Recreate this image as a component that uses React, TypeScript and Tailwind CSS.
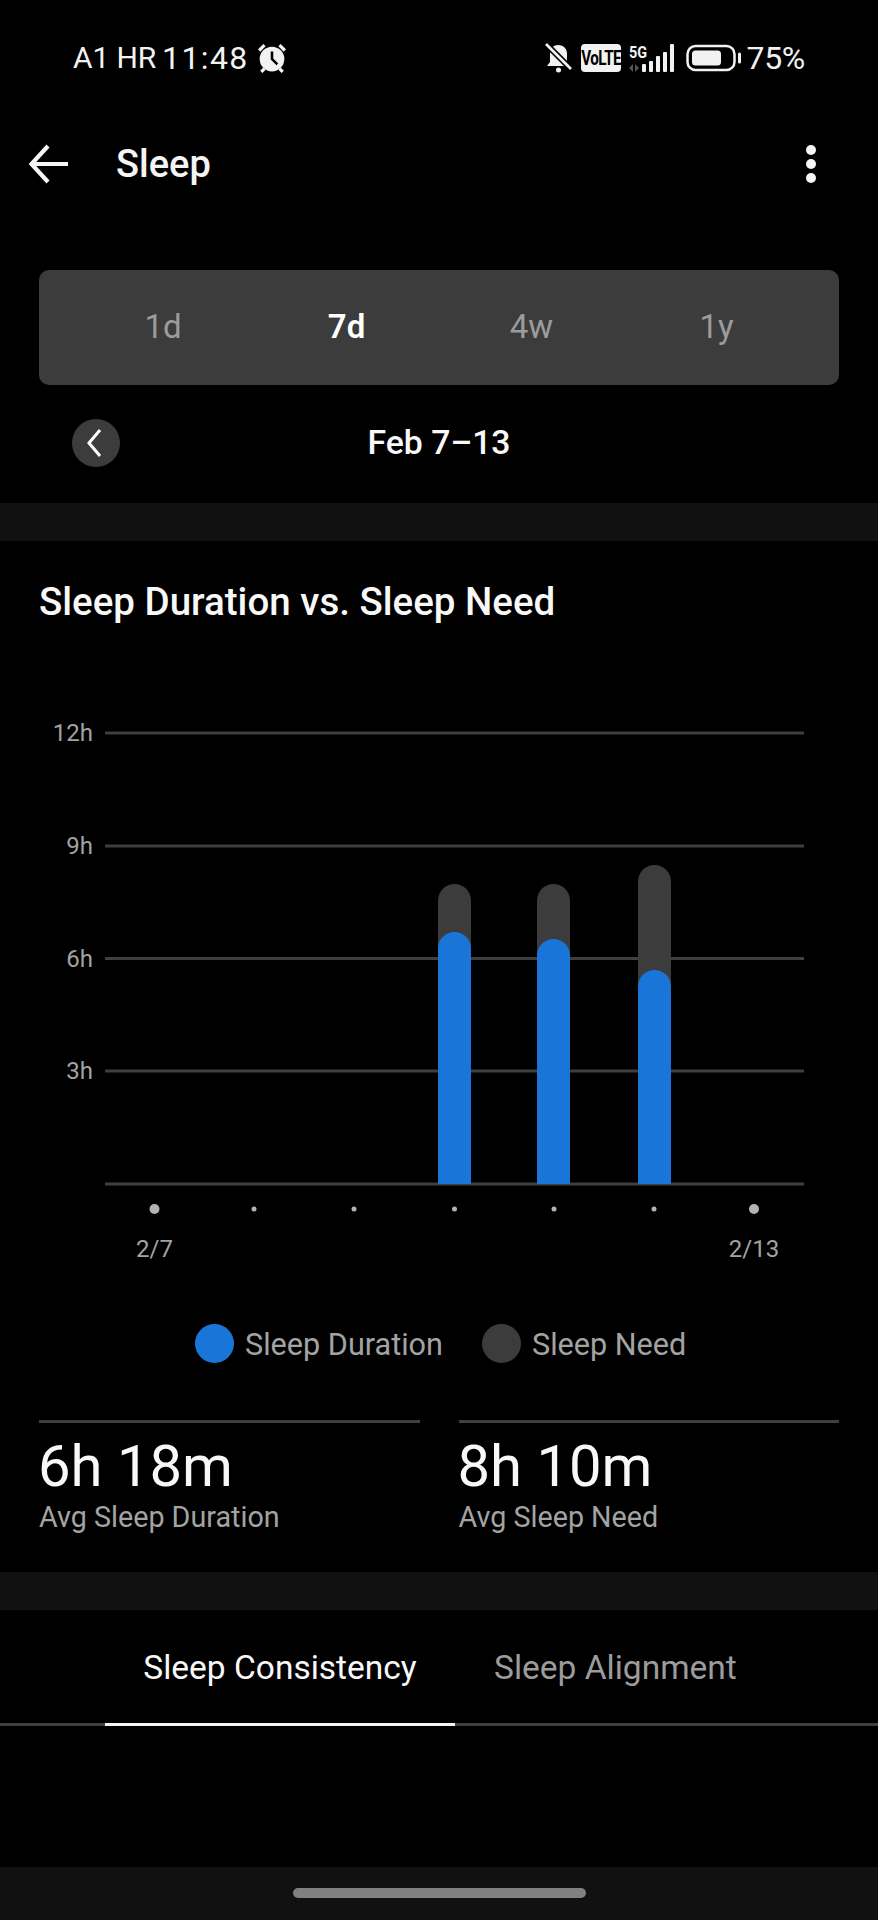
import React from "react";

const ranges = [
  { label: "1d", active: false },
  { label: "7d", active: true },
  { label: "4w", active: false },
  { label: "1y", active: false },
];

const gridLines = [
  { y: 733, label: "12h" },
  { y: 846, label: "9h" },
  { y: 958.5, label: "6h" },
  { y: 1071, label: "3h" },
];

const bars = [
  { x: 438, need: 884, duration: 932 },
  { x: 537, need: 884, duration: 939 },
  { x: 638, need: 865, duration: 970 },
];

const dots = [
  { x: 154.5, r: 5 },
  { x: 254, r: 2.5 },
  { x: 354, r: 2.5 },
  { x: 454.5, r: 2.5 },
  { x: 554, r: 2.5 },
  { x: 654, r: 2.5 },
  { x: 754, r: 5 },
];

const barPath = (x: number, top: number) => {
  const w = 33;
  const r = 16.5;
  return `M${x} 1184V${top + r}a${r} ${r} 0 0 1 ${w} 0V1184Z`;
};

const StatusBar = () => (
  <div className="h-[116px] flex items-center pl-[73px] pr-[73px] text-[#f2f2f2] relative">
    <span className="text-[30px] leading-none w-[85px] whitespace-nowrap tracking-[-0.1px]">A1 HR</span>
    <span className="text-[32px] leading-none ml-[4px] whitespace-nowrap tracking-[1.4px]">11:48</span>
    <svg className="ml-[8px]" width="30" height="30" viewBox="0 0 28 28">
      <circle cx="14" cy="15" r="11.5" fill="#f2f2f2" />
      <path d="M14 8v7l5 5" stroke="#000" strokeWidth="2.4" fill="none" />
      <path d="M2 7l5-5M26 7l-5-5M4 27l3-3M24 27l-3-3" stroke="#f2f2f2" strokeWidth="3" fill="none" />
    </svg>
    <div className="ml-auto flex items-center">
      <svg width="27" height="30" viewBox="0 0 27 30">
        <path d="M13 2c-5 0-8 4-8 9v8l-3 4h23l-3-4v-8c0-5-3-9-9-9z" fill="#f2f2f2" />
        <path d="M1 1l25 25" stroke="#000" strokeWidth="6" />
        <path d="M1 1l25 25" stroke="#f2f2f2" strokeWidth="2.6" />
        <circle cx="13.5" cy="27" r="2.5" fill="#f2f2f2" />
      </svg>
      <div className="ml-[9px] w-[40px] h-[28px] rounded-[4px] bg-[#f2f2f2] text-black text-[20px] font-bold leading-none flex items-center justify-center tracking-[-0.8px]">
        <span className="inline-block scale-x-[0.76] whitespace-nowrap">VoLTE</span>
      </div>
      <div className="ml-[8px] relative w-[45px] h-[28px]">
        <span className="absolute left-0 top-[0px] text-[17px] font-bold leading-none inline-block origin-left scale-x-[0.85]">5G</span>
        <svg className="absolute left-0 top-0" width="45" height="28" viewBox="0 0 45 28">
          <path d="M4 20v8L0 24zM6 20l4 4-4 4z" fill="#555" />
          <rect x="13" y="20" width="4" height="8" rx="1" fill="#f2f2f2" />
          <rect x="20" y="17" width="4" height="11" rx="1" fill="#f2f2f2" />
          <rect x="27" y="12" width="4" height="16" rx="1" fill="#f2f2f2" />
          <rect x="34" y="8" width="4" height="20" rx="1" fill="#f2f2f2" />
          <rect x="41" y="0" width="4" height="28" rx="1" fill="#f2f2f2" />
        </svg>
      </div>
      <svg className="ml-[12px]" width="55" height="28" viewBox="0 0 55 28">
        <rect x="1.5" y="2" width="47" height="24" rx="8" fill="none" stroke="#f2f2f2" strokeWidth="2.5" />
        <rect x="6" y="6.5" width="29" height="15" rx="3.5" fill="#f2f2f2" />
        <rect x="52" y="8.5" width="3" height="11" rx="1.5" fill="#f2f2f2" />
      </svg>
      <span className="ml-[5px] text-[32px] leading-none whitespace-nowrap tracking-[-0.3px]">75%</span>
    </div>
  </div>
);

const Header = () => (
  <div className="h-[96px] flex items-center relative">
    <svg className="ml-[28px]" width="41" height="42" viewBox="0 0 41 42" fill="none" stroke="#f5f5f5" strokeWidth="4.2">
      <path d="M40 21H5" />
      <path d="M20 3L3.5 21 20 39" />
    </svg>
    <h1 className="ml-[47px] text-[38px] font-medium leading-none text-[#f5f5f5]">Sleep</h1>
    <div className="ml-auto mr-[62px] flex flex-col gap-[4px]">
      <span className="w-[10px] h-[10px] rounded-full bg-[#f5f5f5]" />
      <span className="w-[10px] h-[10px] rounded-full bg-[#f5f5f5]" />
      <span className="w-[10px] h-[10px] rounded-full bg-[#f5f5f5]" />
    </div>
  </div>
);

const Chart = () => (
  <svg className="block" width="878" height="580" viewBox="0 700 878 580">
    {gridLines.map((line) => (
      <g key={line.label}>
        <line x1="105" x2="804" y1={line.y} y2={line.y} stroke="#3f3f3f" strokeWidth="3" />
        <text x="93" y={line.y + 8} textAnchor="end" fill="#a3a3a3" fontSize="24">
          {line.label}
        </text>
      </g>
    ))}
    <line x1="105" x2="804" y1="1184" y2="1184" stroke="#3f3f3f" strokeWidth="3" />
    {bars.map((bar) => (
      <g key={bar.x}>
        <path d={barPath(bar.x, bar.need)} fill="#3c3c3c" />
        <path d={barPath(bar.x, bar.duration)} fill="#1976d8" />
      </g>
    ))}
    {dots.map((dot) => (
      <circle key={dot.x} cx={dot.x} cy="1209" r={dot.r} fill="#b3b3b3" />
    ))}
    <text x="154.5" y="1257" textAnchor="middle" fill="#a3a3a3" fontSize="24">2/7</text>
    <text x="754" y="1257" textAnchor="middle" fill="#a3a3a3" fontSize="24">2/13</text>
  </svg>
);

const Stat = ({ value, label }: { value: string; label: string }) => (
  <div className="flex-1 border-t-[3px] border-[#3f3f3f]">
    <div className="mt-[17px] -ml-[1px] text-[58px] leading-[52px] text-[#f8f8f8]">{value}</div>
    <div className="mt-[7px] text-[28.7px] leading-[36px] text-[#a3a3a3]">{label}</div>
  </div>
);

export default function App() {
  return (
    <div className="w-[878px] h-[1920px] bg-black overflow-hidden flex flex-col font-['Roboto','Liberation_Sans',sans-serif]">
      <StatusBar />
      <Header />

      <div className="mt-[58px] mx-[39px] h-[115px] rounded-[10px] bg-[#3c3c3c] flex items-center justify-center pb-[2px]">
        {ranges.map((range) => (
          <span
            key={range.label}
            className={`w-[185px] text-center text-[33px] leading-none ${range.active ? "font-semibold text-white" : "text-[#9c9c9c]"} ${range.label === "1d" ? "pl-[3px]" : ""}`}
          >
            {range.label}
          </span>
        ))}
      </div>

      <div className="mt-[34px] h-[48px] relative flex items-center justify-center">
        <div className="absolute left-[72px] top-0 w-[48px] h-[48px] rounded-full bg-[#3c3c3c] flex items-center justify-center">
          <svg width="20" height="28" viewBox="0 0 20 28" fill="none" stroke="#fff" strokeWidth="3">
            <path d="M14 1L3 14l11 13" />
          </svg>
        </div>
        <span className="text-[33.8px] font-medium leading-none text-[#f8f8f8]">Feb 7–13</span>
      </div>

      <div className="mt-[36px] h-[38px] bg-[#111111]" />

      <h2 className="mt-[34px] ml-[39px] h-[54px] text-[38.5px] leading-[54px] font-medium text-[#f8f8f8]">
        Sleep Duration vs. Sleep Need
      </h2>
      <div className="mt-[71px]">
        <Chart />
      </div>

      <div className="mt-[44px] h-[39px] flex items-center pl-[195px]">
        <span className="w-[39px] h-[39px] rounded-full bg-[#1976d8]" />
        <span className="ml-[11px] pt-[3px] text-[30.6px] leading-none text-[#a3a3a3]">Sleep Duration</span>
        <span className="ml-[39px] w-[39px] h-[39px] rounded-full bg-[#3c3c3c]" />
        <span className="ml-[11px] pt-[3px] text-[30.6px] leading-none text-[#a3a3a3]">Sleep Need</span>
      </div>

      <div className="mt-[57px] mx-[39px] flex gap-[39px]">
        <Stat value="6h 18m" label="Avg Sleep Duration" />
        <Stat value="8h 10m" label="Avg Sleep Need" />
      </div>

      <div className="mt-[37px] h-[38px] bg-[#111111]" />

      <div className="h-[116px] border-b-[3px] border-[#3f3f3f] flex relative">
        <div className="ml-[105px] w-[350px] -mb-[3px] pt-[3px] border-b-[3px] border-[#f5f5f5] flex items-center justify-center">
          <span className="text-[33.5px] leading-none text-[#f8f8f8]">Sleep Consistency</span>
        </div>
        <div className="ml-[39px] pt-[3px] flex items-center">
          <span className="text-[33.5px] leading-none text-[#9c9c9c]">Sleep Alignment</span>
        </div>
      </div>

      <div className="flex-1" />

      <div className="h-[53px] bg-[#111111] flex justify-center pt-[21px]">
        <div className="w-[293px] h-[10px] rounded-full bg-[#808080]" />
      </div>
    </div>
  );
}
